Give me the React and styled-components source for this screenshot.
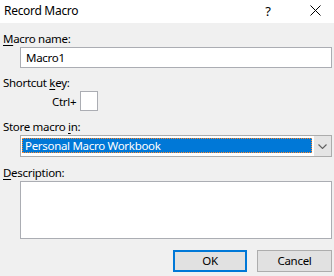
import React from 'react';
import styled, { createGlobalStyle } from 'styled-components';

const GlobalStyle = createGlobalStyle`
  html, body {
    margin: 0;
    padding: 0;
    background: #f0f0f0;
    overflow: hidden;
  }
  body {
    font-family: "Segoe UI", "Noto Sans", sans-serif;
    font-size: 11.5px;
    letter-spacing: -0.3px;
    color: #000;
  }
`;

const Dialog = styled.div`
  width: 334px;
  height: 276px;
  background: #f0f0f0;
  display: flex;
  flex-direction: column;
  overflow: hidden;
`;

const TitleBar = styled.div`
  height: 23px;
  background: #fff;
  display: flex;
  align-items: center;
  padding-left: 4px;
`;

const Title = styled.div`
  flex: 1;
  font-size: 12px;
  line-height: 16px;
  margin-top: -2px;
`;

const TitleButton = styled.div`
  width: ${p => p.$w}px;
  display: flex;
  justify-content: center;
  align-items: center;
  font-size: 13px;
  margin-top: -2px;
`;

const Body = styled.div`
  flex: 1;
  display: flex;
  flex-direction: column;
  padding: 8px 2px 0 3px;
`;

const Label = styled.div`
  line-height: 16px;
  height: 16px;
  margin-top: ${p => p.$mt || 0}px;

  u {
    text-decoration-thickness: 1px;
    text-underline-offset: 2px;
  }
`;

const Field = styled.div`
  margin-left: 17px;
  height: ${p => p.$h}px;
  box-sizing: border-box;
  background: #fff;
  border: 1px solid #abadb3;
  display: flex;
  align-items: center;
`;

const FieldText = styled.span`
  padding-left: 5px;
  line-height: 16px;
`;

const CtrlRow = styled.div`
  display: flex;
  align-items: center;
  padding-left: 49px;
  height: 20px;
  gap: 4px;
`;

const KeyBox = styled.div`
  width: 18px;
  height: 20px;
  box-sizing: border-box;
  background: #fff;
  border: 1px solid #abadb3;
`;

const Select = styled.div`
  margin-left: 17px;
  height: 22px;
  box-sizing: border-box;
  border: 1px solid #acacac;
  background: #fff;
  display: flex;
  align-items: stretch;
`;

const SelectValue = styled.div`
  flex: 1;
  margin: 2px 1px 3px 1px;
  background: #0078d7;
  color: #fff;
  outline: 1px dotted #ff8728;
  outline-offset: -1px;
  padding-left: 3px;
  line-height: 15px;
  display: flex;
  align-items: center;
`;

const SelectArrow = styled.div`
  width: 17px;
  background: #e5e5e5;
  border-left: 1px solid #fff;
  display: flex;
  align-items: center;
  justify-content: center;
`;

const ButtonRow = styled.div`
  display: flex;
  justify-content: flex-end;
  gap: 10px;
  margin-top: 11px;
`;

const Button = styled.div`
  width: ${p => p.$w}px;
  height: 22px;
  box-sizing: border-box;
  background: #e1e1e1;
  border: ${p => (p.$default ? '2px solid #0078d7' : '1px solid #adadad')};
  display: flex;
  align-items: center;
  justify-content: center;
  line-height: 16px;
`;

export default function App() {
  return (
    <>
      <GlobalStyle />
      <Dialog>
        <TitleBar>
          <Title>Record Macro</Title>
          <TitleButton $w={56}>?</TitleButton>
          <TitleButton $w={38}>
            <svg width="11" height="11" viewBox="0 0 11 11">
              <path d="M0.5 0.5 L10.5 10.5 M10.5 0.5 L0.5 10.5" stroke="#000" strokeWidth="1" fill="none" />
            </svg>
          </TitleButton>
        </TitleBar>
        <Body>
          <Label>
            <u>M</u>acro name:
          </Label>
          <Field $h={21}>
            <FieldText>Macro1</FieldText>
          </Field>

          <Label $mt={7}>
            Shortcut <u>k</u>ey:
          </Label>
          <CtrlRow>
            <span>Ctrl+</span>
            <KeyBox />
          </CtrlRow>

          <Label $mt={8}>
            Store macro <u>i</u>n:
          </Label>
          <Select>
            <SelectValue>Personal Macro Workbook</SelectValue>
            <SelectArrow>
              <svg width="9" height="5" viewBox="0 0 9 5">
                <path d="M0.5 0.5 L4.5 4.5 L8.5 0.5" stroke="#606060" strokeWidth="1.1" fill="none" />
              </svg>
            </SelectArrow>
          </Select>

          <Label $mt={8}>
            <u>D</u>escription:
          </Label>
          <Field $h={58} />

          <ButtonRow>
            <Button $w={74} $default>OK</Button>
            <Button $w={75}>Cancel</Button>
          </ButtonRow>
        </Body>
      </Dialog>
    </>
  );
}
